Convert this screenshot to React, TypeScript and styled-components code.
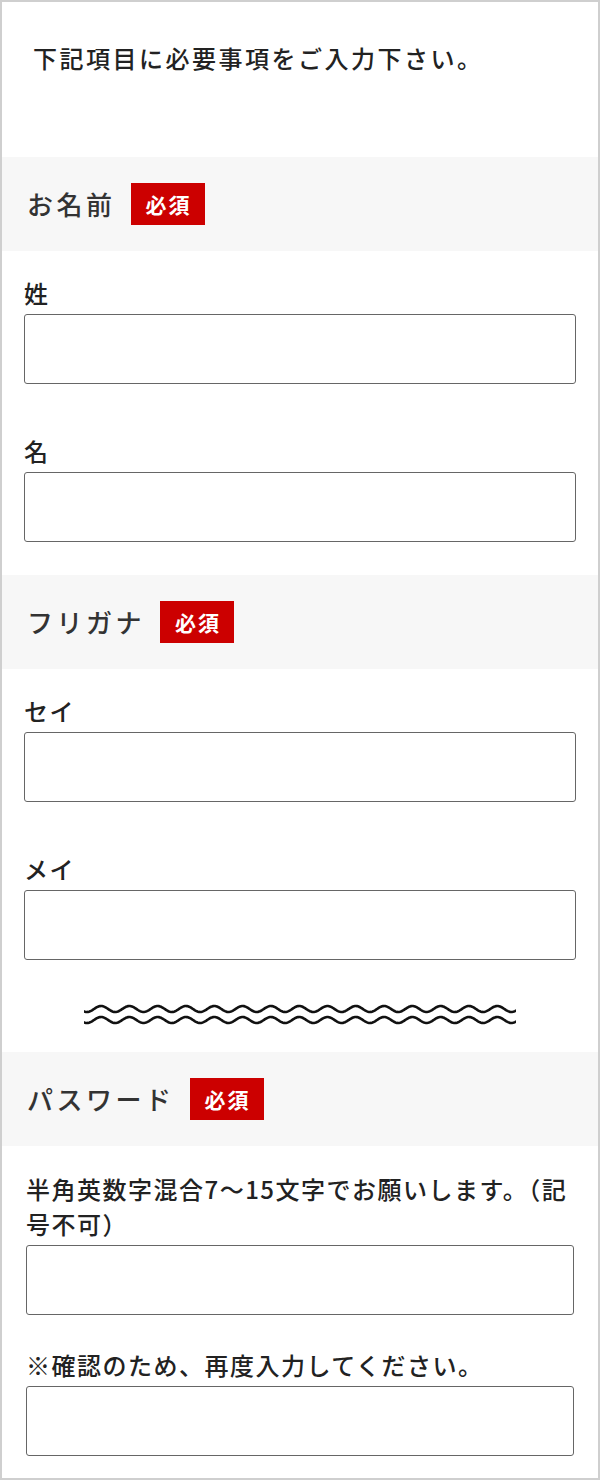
import styled, { createGlobalStyle } from "styled-components";

const GlobalStyle = createGlobalStyle`
  body {
    margin: 0;
    background: #fff;
    font-family: "Noto Sans CJK JP", "Noto Sans", sans-serif;
  }
`;

const Frame = styled.div`
  width: 600px;
  height: 1480px;
  box-sizing: border-box;
  border: 2px solid #cfcfcf;
  background: #fff;
  overflow: hidden;
`;

const Intro = styled.p`
  margin: 0;
  height: 155px;
  box-sizing: border-box;
  padding: 39px 0 0 31px;
  font-size: 24px;
  line-height: 34px;
  letter-spacing: 2.5px;
  font-weight: 500;
  color: #222;
`;

const SectionHead = styled.div`
  height: 94px;
  display: flex;
  align-items: center;
  gap: 15px;
  padding-left: 25px;
  background: #f7f7f7;
`;

const HeadTitle = styled.h2`
  margin: 0;
  font-size: 26px;
  line-height: 1;
  letter-spacing: 3.5px;
  font-weight: 500;
  color: #333;
`;

const RequiredBadge = styled.span`
  display: inline-flex;
  align-items: center;
  justify-content: center;
  height: 42px;
  padding: 0 13px 0 15px;
  background: #cc0000;
  color: #fff;
  font-size: 21px;
  font-weight: 700;
  letter-spacing: 2px;
`;

const SectionBody = styled.div<{ $side?: number; $gap?: number; $bottom?: number }>`
  display: flex;
  flex-direction: column;
  gap: ${(p) => p.$gap ?? 50}px;
  padding: 25px ${(p) => p.$side ?? 22}px ${(p) => p.$bottom ?? 33}px;
`;

const Field = styled.label`
  display: flex;
  flex-direction: column;
  gap: 4px;
`;

const FieldLabel = styled.span<{ $lineHeight?: number }>`
  font-size: 24px;
  line-height: ${(p) => p.$lineHeight ?? 34}px;
  letter-spacing: 1.5px;
  font-weight: 500;
  color: #222;
`;

const TextInput = styled.input`
  appearance: none;
  width: 100%;
  height: 70px;
  box-sizing: border-box;
  margin: 0;
  padding: 0 12px;
  border: 1px solid #666;
  border-radius: 3px;
  background: #fff;
  font-size: 20px;
  outline: none;
`;

const WaveDivider = styled.div`
  display: flex;
  justify-content: center;
  margin: 40px 0 24px;
`;

function wavePath(mid: number, amp: number, period: number, width: number, x0: number) {
  const pts: string[] = [];
  for (let x = 0; x <= width; x += 1) {
    const y = mid - amp * Math.sin((2 * Math.PI * (x - x0)) / period);
    pts.push(`${x === 0 ? "M" : "L"}${x} ${y.toFixed(2)}`);
  }
  return pts.join(" ");
}

function Wave() {
  const width = 432;
  return (
    <svg width={width} height={28} viewBox={`0 0 ${width} 28`}>
      <path d={wavePath(9, 3, 28.3, width, 10)} fill="none" stroke="#111" strokeWidth={2.6} strokeLinecap="round" />
      <path d={wavePath(20, 3, 28.3, width, 10)} fill="none" stroke="#111" strokeWidth={2.6} strokeLinecap="round" />
    </svg>
  );
}

function SectionTitle({ title }: { title: string }) {
  return (
    <SectionHead>
      <HeadTitle>{title}</HeadTitle>
      <RequiredBadge>必須</RequiredBadge>
    </SectionHead>
  );
}

export default function App() {
  return (
    <>
      <GlobalStyle />
      <Frame>
        <Intro>下記項目に必要事項をご入力下さい。</Intro>

        <SectionTitle title="お名前" />
        <SectionBody>
          <Field>
            <FieldLabel>姓</FieldLabel>
            <TextInput type="text" />
          </Field>
          <Field>
            <FieldLabel>名</FieldLabel>
            <TextInput type="text" />
          </Field>
        </SectionBody>

        <SectionTitle title="フリガナ" />
        <SectionBody $bottom={0}>
          <Field>
            <FieldLabel>セイ</FieldLabel>
            <TextInput type="text" />
          </Field>
          <Field>
            <FieldLabel>メイ</FieldLabel>
            <TextInput type="text" />
          </Field>
        </SectionBody>

        <WaveDivider>
          <Wave />
        </WaveDivider>

        <SectionTitle title="パスワード" />
        <SectionBody $side={24} $gap={33} $bottom={23}>
          <Field>
            <FieldLabel $lineHeight={35}>半角英数字混合7〜15文字でお願いします。（記号不可）</FieldLabel>
            <TextInput type="password" />
          </Field>
          <Field>
            <FieldLabel>※確認のため、再度入力してください。</FieldLabel>
            <TextInput type="password" />
          </Field>
        </SectionBody>
      </Frame>
    </>
  );
}
